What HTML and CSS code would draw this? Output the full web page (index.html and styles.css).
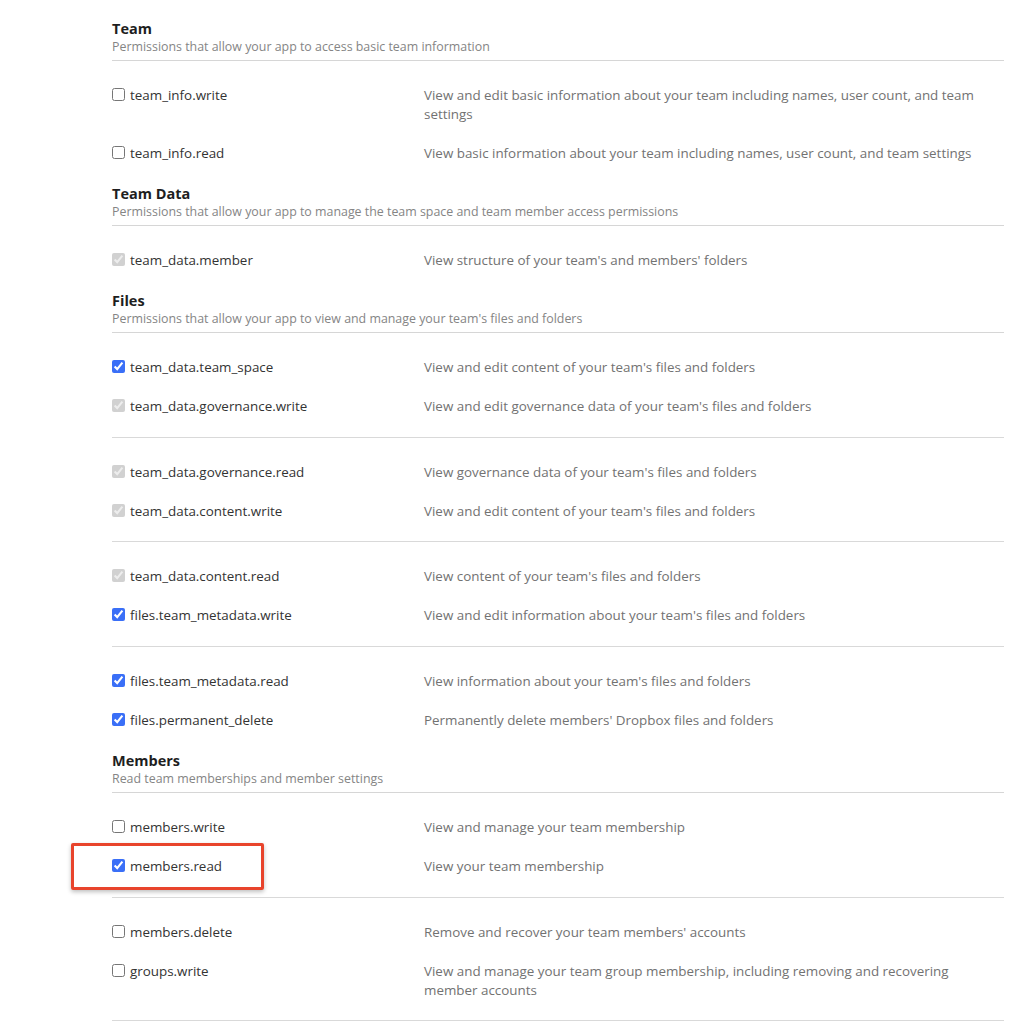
FILE: index.html
```html
<!DOCTYPE html>
<html lang="en">
<head>
<meta charset="utf-8">
<title>Team scopes</title>
<link rel="stylesheet" href="styles.css">
</head>
<body>
<main class="page">

  <section class="section">
    <header class="section-head">
      <h2 class="section-title">Team</h2>
      <p class="section-sub">Permissions that allow your app to access basic team information</p>
    </header>
    <div class="group">
      <div class="row">
        <label class="scope"><input type="checkbox"><span>team_info.write</span></label>
        <div class="desc">View and edit basic information about your team including names, user count, and team settings</div>
      </div>
      <div class="row">
        <label class="scope"><input type="checkbox"><span>team_info.read</span></label>
        <div class="desc">View basic information about your team including names, user count, and team settings</div>
      </div>
    </div>
  </section>

  <section class="section">
    <header class="section-head">
      <h2 class="section-title">Team Data</h2>
      <p class="section-sub">Permissions that allow your app to manage the team space and team member access permissions</p>
    </header>
    <div class="group">
      <div class="row">
        <label class="scope"><input type="checkbox" checked disabled><span>team_data.member</span></label>
        <div class="desc">View structure of your team's and members' folders</div>
      </div>
    </div>
  </section>

  <section class="section">
    <header class="section-head">
      <h2 class="section-title">Files</h2>
      <p class="section-sub">Permissions that allow your app to view and manage your team's files and folders</p>
    </header>
    <div class="group bordered">
      <div class="row">
        <label class="scope"><input type="checkbox" checked><span>team_data.team_space</span></label>
        <div class="desc">View and edit content of your team's files and folders</div>
      </div>
      <div class="row">
        <label class="scope"><input type="checkbox" checked disabled><span>team_data.governance.write</span></label>
        <div class="desc">View and edit governance data of your team's files and folders</div>
      </div>
    </div>
    <div class="group bordered">
      <div class="row">
        <label class="scope"><input type="checkbox" checked disabled><span>team_data.governance.read</span></label>
        <div class="desc">View governance data of your team's files and folders</div>
      </div>
      <div class="row">
        <label class="scope"><input type="checkbox" checked disabled><span>team_data.content.write</span></label>
        <div class="desc">View and edit content of your team's files and folders</div>
      </div>
    </div>
    <div class="group bordered">
      <div class="row">
        <label class="scope"><input type="checkbox" checked disabled><span>team_data.content.read</span></label>
        <div class="desc">View content of your team's files and folders</div>
      </div>
      <div class="row">
        <label class="scope"><input type="checkbox" checked><span>files.team_metadata.write</span></label>
        <div class="desc">View and edit information about your team's files and folders</div>
      </div>
    </div>
    <div class="group">
      <div class="row">
        <label class="scope"><input type="checkbox" checked><span>files.team_metadata.read</span></label>
        <div class="desc">View information about your team's files and folders</div>
      </div>
      <div class="row">
        <label class="scope"><input type="checkbox" checked><span>files.permanent_delete</span></label>
        <div class="desc">Permanently delete members' Dropbox files and folders</div>
      </div>
    </div>
  </section>

  <section class="section">
    <header class="section-head">
      <h2 class="section-title">Members</h2>
      <p class="section-sub">Read team memberships and member settings</p>
    </header>
    <div class="group bordered">
      <div class="row">
        <label class="scope"><input type="checkbox"><span>members.write</span></label>
        <div class="desc">View and manage your team membership</div>
      </div>
      <div class="row highlighted">
        <label class="scope"><input type="checkbox" checked><span>members.read</span></label>
        <div class="desc">View your team membership</div>
        <div class="highlight-box" aria-hidden="true"></div>
      </div>
    </div>
    <div class="group bordered">
      <div class="row">
        <label class="scope"><input type="checkbox"><span>members.delete</span></label>
        <div class="desc">Remove and recover your team members' accounts</div>
      </div>
      <div class="row">
        <label class="scope"><input type="checkbox"><span>groups.write</span></label>
        <div class="desc">View and manage your team group membership, including removing and recovering member accounts</div>
      </div>
    </div>
  </section>

</main>
</body>
</html>
```

FILE: styles.css
```css
* { box-sizing: border-box; }

html, body {
  margin: 0;
  padding: 0;
  background: #ffffff;
}

body {
  font-family: "Open Sans", "Liberation Sans", Arial, sans-serif;
  color: #333333;
  overflow: hidden;
}

.page {
  width: 892px;
  margin-left: 112px;
  padding-top: 19px;
}

.section-head {
  padding-bottom: 5px;
  border-bottom: 1px solid #d6d6d6;
}

.section-title {
  margin: 0;
  font-size: 14.5px;
  line-height: 20px;
  font-weight: 700;
  color: #1e1e1e;
}

.section-sub {
  margin: 0;
  font-size: 12.4px;
  line-height: 16px;
  color: #858585;
}

.group {
  padding: 15px 0 11px;
}

.group.bordered {
  padding-bottom: 10.7px;
  border-bottom: 1px solid #d9d9d9;
}

.row {
  display: flex;
  align-items: flex-start;
  padding: 10px 0;
  font-size: 13.4px;
  line-height: 19px;
}

.highlighted {
  position: relative;
}

.scope {
  display: flex;
  align-items: flex-start;
  width: 312px;
  flex: 0 0 312px;
  color: #333333;
}

.scope input {
  margin: 2px 5px 0 0;
  width: 13px;
  height: 13px;
  flex: 0 0 13px;
  accent-color: #3a6ff7;
}

.desc {
  flex: 1 1 auto;
  max-width: 568px;
  color: #727272;
}

.highlight-box {
  position: absolute;
  left: -41px;
  top: -4px;
  width: 193px;
  height: 47px;
  border: 3px solid #e8442c;
  border-radius: 2px;
  box-shadow: 0 2px 4px rgba(0, 0, 0, 0.25);
  pointer-events: none;
}
```
